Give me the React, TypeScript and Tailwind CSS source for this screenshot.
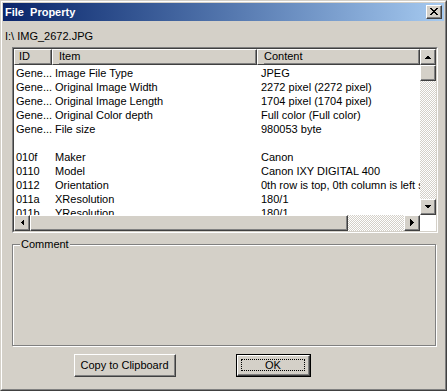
import React from "react";

const rows: [string, string, string][] = [
  ["Gene...", "Image File Type", "JPEG"],
  ["Gene...", "Original Image Width", "2272 pixel (2272 pixel)"],
  ["Gene...", "Original Image Length", "1704 pixel (1704 pixel)"],
  ["Gene...", "Original Color depth", "Full color (Full color)"],
  ["Gene...", "File size", "980053 byte"],
  ["", "", ""],
  ["010f", "Maker", "Canon"],
  ["0110", "Model", "Canon IXY DIGITAL 400"],
  ["0112", "Orientation", "0th row is top, 0th column is left side"],
  ["011a", "XResolution", "180/1"],
  ["011b", "YResolution", "180/1"],
];

const checker =
  "bg-[repeating-conic-gradient(#ffffff_0_25%,#d4d0c8_0_50%)] bg-[length:2px_2px]";

function Raised({ className = "", children }: { className?: string; children?: React.ReactNode }) {
  return (
    <div
      className={`border border-t-white border-l-white border-r-[#404040] border-b-[#404040] bg-[#d4d0c8] ${className}`}
    >
      <div className="flex h-full w-full items-center border-r border-b border-[#808080]">{children}</div>
    </div>
  );
}

function Arrow({ dir }: { dir: "up" | "down" | "left" | "right" }) {
  const pts = {
    up: "0,4 7,4 3.5,0.5",
    down: "0,0 7,0 3.5,3.5",
    left: "4,0 4,7 0.5,3.5",
    right: "0,0 0,7 3.5,3.5",
  }[dir];
  const horiz = dir === "up" || dir === "down";
  return (
    <svg width={horiz ? 7 : 4} height={horiz ? 4 : 7} className="mx-auto">
      <polygon points={pts} fill="#000" shapeRendering="crispEdges" />
    </svg>
  );
}

export default function App() {
  return (
    <div className="h-[391px] w-[447px] bg-white font-['Liberation_Sans',Arial,sans-serif] text-[11px] text-black">
      <div className="h-full w-full border border-t-[#d4d0c8] border-l-[#d4d0c8] border-r-[#404040] border-b-[#404040]">
        <div className="flex h-full w-full flex-col border border-t-white border-l-white border-r-[#808080] border-b-[#808080] bg-[#d4d0c8] p-px">
          {/* Title bar */}
          <div className="flex h-[18px] items-center bg-gradient-to-r from-[#0a246a] to-[#a6caf0] pl-[2px] pr-[2px]">
            <span className="whitespace-pre font-bold text-white">File  Property</span>
            <Raised className="ml-auto h-[14px] w-[16px]">
              <svg width="8" height="7" className="mx-auto" shapeRendering="crispEdges">
                <path d="M0 0h2l2 2.5 2-2.5h2L5 3.5 8 7H6L4 4.5 2 7H0l3-3.5z" fill="#000" />
              </svg>
            </Raised>
          </div>

          {/* File path */}
          <div className="mt-[9px] ml-[2px] h-[13px] leading-[13px]">I:\ IMG_2672.JPG</div>

          {/* List view */}
          <div className="mt-[4px] ml-[9px] h-[186px] w-[426px] border border-t-[#808080] border-l-[#808080] border-r-white border-b-white">
            <div className="flex h-full w-full border border-t-[#404040] border-l-[#404040] border-r-[#d4d0c8] border-b-[#d4d0c8] bg-white">
              <div className="flex h-full flex-1 flex-col overflow-hidden">
                {/* Header */}
                <div className="flex h-[16px] shrink-0">
                  <Raised className="h-full w-[38px] pl-[4px]">ID</Raised>
                  <Raised className="h-full w-[205px] pl-[6px]">Item</Raised>
                  <Raised className="h-full flex-1 pl-[6px]">Content</Raised>
                </div>
                {/* Rows */}
                <div className="h-[150px] overflow-hidden pt-px">
                  {rows.map((r, i) => (
                    <div key={i} className="flex h-[14px] whitespace-nowrap leading-[14px]">
                      <div className="w-[38px] shrink-0 overflow-hidden pl-[2px]">{r[0]}</div>
                      <div className="w-[205px] shrink-0 overflow-hidden pl-[3px]">{r[1]}</div>
                      <div className="flex-1 overflow-hidden pl-[4px]">{r[2]}</div>
                    </div>
                  ))}
                </div>
                {/* Horizontal scrollbar */}
                <div className="flex h-[16px] shrink-0">
                  <Raised className="h-full w-[16px]">
                    <Arrow dir="left" />
                  </Raised>
                  <Raised className="h-full w-[318px]" />
                  <div className={`h-full flex-1 ${checker}`} />
                  <Raised className="h-full w-[16px]">
                    <Arrow dir="right" />
                  </Raised>
                </div>
              </div>
              {/* Vertical scrollbar */}
              <div className="flex w-[16px] flex-col">
                <Raised className="h-[16px] w-full">
                  <Arrow dir="up" />
                </Raised>
                <Raised className="h-[16px] w-full" />
                <div className={`flex-1 ${checker}`} />
                <Raised className="h-[16px] w-full">
                  <Arrow dir="down" />
                </Raised>
                <div className="h-[16px] bg-white" />
              </div>
            </div>
          </div>

          {/* Comment group */}
          <div className="relative mt-[11px] ml-[9px] h-[102px] w-[424px] border border-[#808080] shadow-[1px_1px_0_#ffffff,inset_1px_1px_0_#ffffff]">
            <span className="absolute -top-[7px] left-[7px] bg-[#d4d0c8] px-[1px] leading-[13px]">Comment</span>
          </div>

          {/* Buttons */}
          <div className="mt-[8px] flex">
            <Raised className="ml-[71px] h-[23px] w-[102px]">
              <span className="w-full text-center">Copy to Clipboard</span>
            </Raised>
            <div className="ml-[60px] h-[23px] w-[75px] border border-black">
              <Raised className="h-full w-full">
                <span className="m-[3px] flex h-[calc(100%-6px)] w-full items-center justify-center border border-dotted border-black">
                  OK
                </span>
              </Raised>
            </div>
          </div>
        </div>
      </div>
    </div>
  );
}
